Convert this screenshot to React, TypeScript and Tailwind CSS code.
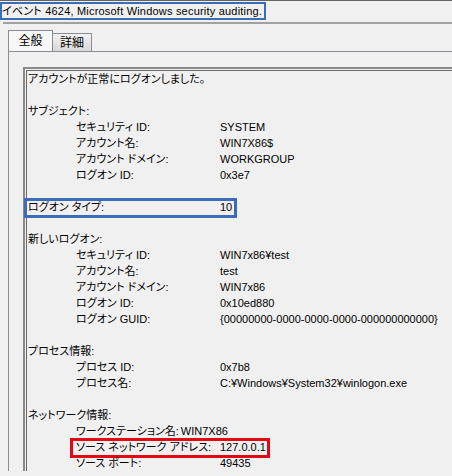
import React from 'react';

type Line =
  | { kind: 'blank' }
  | { kind: 'text'; text: string }
  | { kind: 'field'; label: string; value: string; indent?: boolean; labelWidth?: string; box?: 'blue' | 'red' };

const lines: Line[] = [
  { kind: 'text', text: 'アカウントが正常にログオンしました。' },
  { kind: 'blank' },
  { kind: 'text', text: 'サブジェクト:' },
  { kind: 'field', indent: true, label: 'セキュリティ ID:', value: 'SYSTEM' },
  { kind: 'field', indent: true, label: 'アカウント名:', value: 'WIN7X86$' },
  { kind: 'field', indent: true, label: 'アカウント ドメイン:', value: 'WORKGROUP' },
  { kind: 'field', indent: true, label: 'ログオン ID:', value: '0x3e7' },
  { kind: 'blank' },
  { kind: 'field', label: 'ログオン タイプ:', value: '10', box: 'blue' },
  { kind: 'blank' },
  { kind: 'text', text: '新しいログオン:' },
  { kind: 'field', indent: true, label: 'セキュリティ ID:', value: 'WIN7x86¥test' },
  { kind: 'field', indent: true, label: 'アカウント名:', value: 'test' },
  { kind: 'field', indent: true, label: 'アカウント ドメイン:', value: 'WIN7x86' },
  { kind: 'field', indent: true, label: 'ログオン ID:', value: '0x10ed880' },
  { kind: 'field', indent: true, label: 'ログオン GUID:', value: '{00000000-0000-0000-0000-000000000000}' },
  { kind: 'blank' },
  { kind: 'text', text: 'プロセス情報:' },
  { kind: 'field', indent: true, label: 'プロセス ID:', value: '0x7b8' },
  { kind: 'field', indent: true, label: 'プロセス名:', value: 'C:¥Windows¥System32¥winlogon.exe' },
  { kind: 'blank' },
  { kind: 'text', text: 'ネットワーク情報:' },
  // label runs past the first tab stop, so the value follows it directly
  { kind: 'field', indent: true, label: 'ワークステーション名:', value: 'WIN7X86', labelWidth: 'mr-[2px]' },
  { kind: 'field', indent: true, label: 'ソース ネットワーク アドレス:', value: '127.0.0.1', box: 'red' },
  { kind: 'field', indent: true, label: 'ソース ポート:', value: '49435' },
];

function EventLine({ line }: { line: Line }) {
  if (line.kind === 'blank') return <div className="h-[16px]" />;
  if (line.kind === 'text') {
    return <div className="h-[16px] leading-[16px] whitespace-nowrap">{line.text}</div>;
  }

  const labelWidth = line.labelWidth ?? (line.indent ? 'w-[144px]' : 'w-[192px]');

  return (
    <div className={`relative flex h-[16px] leading-[16px] whitespace-nowrap ${line.indent ? 'pl-[48px]' : ''}`}>
      <span className={`${labelWidth} shrink-0`}>{line.label}</span>
      <span>{line.value}</span>
      {line.box === 'blue' && (
        <div className="absolute left-[-4px] top-[-1px] h-[20px] w-[213px] border-[3px] border-[#3a6cb8]" />
      )}
      {line.box === 'red' && (
        <div className="absolute left-[42px] top-[-1px] h-[20px] w-[200px] border-[3px] border-[#e30613]" />
      )}
    </div>
  );
}

export default function App() {
  return (
    <div className="w-[452px] h-[476px] overflow-hidden bg-[#f0f0f0] border-t border-[#646464] text-black text-[11px] font-['Liberation_Sans','Noto_Sans_CJK_JP',sans-serif] [font-feature-settings:'palt']">
      {/* title */}
      <div className="h-[21px] pt-[1px]">
        <span className="inline-block h-[18px] leading-[14px] border-2 border-[#3a6cb8] pr-[2px] tracking-[0.2px] whitespace-nowrap">
          イベント 4624, Microsoft Windows security auditing.
        </span>
      </div>
      <div className="ml-[3px] h-[2px] bg-[#a0a0a0]" />

      {/* tabs */}
      <div className="pl-[8px] pt-[6px]">
        <div className="flex items-end">
          <div className="h-[21px] w-[45px] border border-b-0 border-[#898c95] bg-[#f7f7f7] text-[12px] leading-[20px] text-center">
            全般
          </div>
          <div className="h-[18px] w-[39px] border border-l-0 border-b-0 border-[#898c95] bg-gradient-to-b from-[#f2f2f2] to-[#d9d9d9] text-[12px] leading-[18px] text-center">
            詳細
          </div>
        </div>

        {/* tab page */}
        <div className="border-l border-t border-[#898c95] pl-[14px] pt-[15px]">
          <div className="border-l-2 border-t-2 border-l-[#8a8a8a] border-t-[#8a8a8a] pl-[1px] pt-[1px]">
            <div className="border-l border-t border-[#696969] pl-[1px]">
              {lines.map((line, i) => (
                <EventLine key={i} line={line} />
              ))}
            </div>
          </div>
        </div>
      </div>
    </div>
  );
}
